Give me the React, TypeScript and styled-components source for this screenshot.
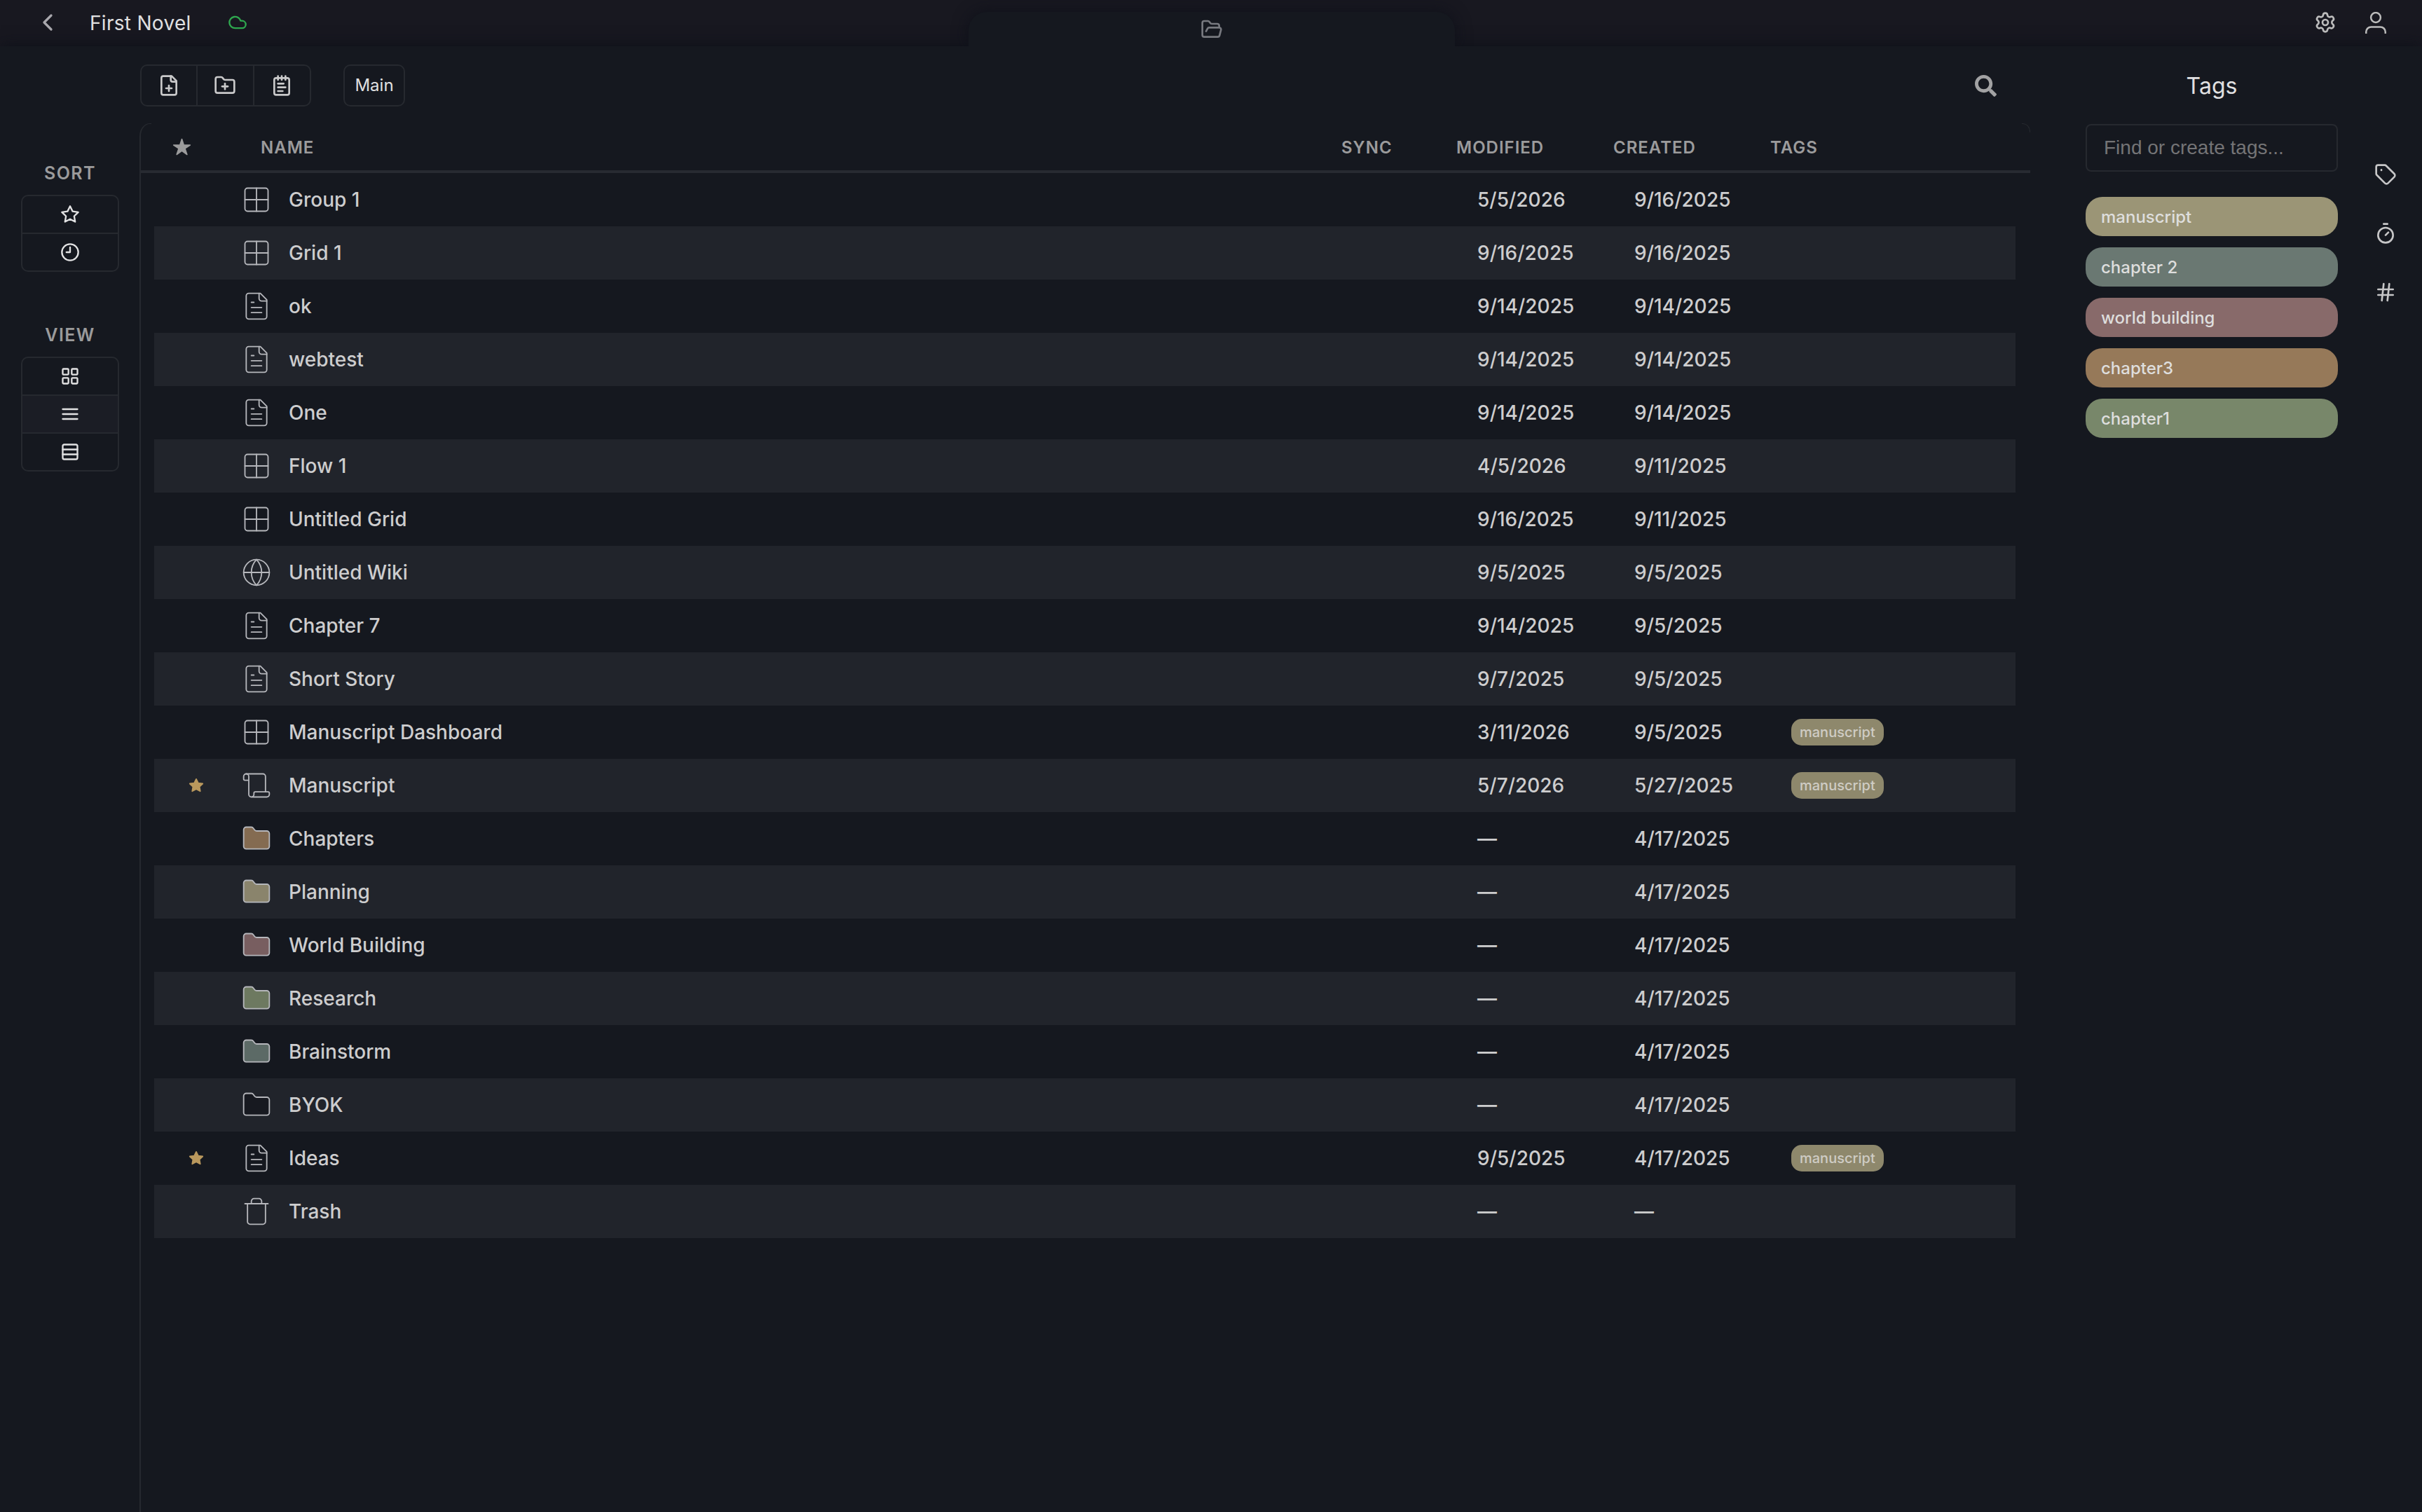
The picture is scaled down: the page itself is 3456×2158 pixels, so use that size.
import React from "react";
import styled, { createGlobalStyle } from "styled-components";
import { IoStar } from "react-icons/io5";
import { FaSearch } from "react-icons/fa";
import { Settings } from "lucide-react";

const c = {
  page: "#15181f",
  bar: "#181820",
  stripe: "#21242b",
  border: "#26292f",
  line: "#272a31",
  muted: "#9b9b9c",
  text: "#cdcdce",
  bright: "#e0e0e1",
};

const GlobalStyle = createGlobalStyle`
  * { box-sizing: border-box; }
  html, body { margin: 0; padding: 0; background: ${c.page}; }
  body { font-family: Inter, "Liberation Sans", sans-serif; color: ${c.text}; overflow: hidden; }
  button { font: inherit; color: inherit; background: none; border: 0; padding: 0; margin: 0; }
`;

/* ---------- icons ---------- */

const Svg = styled.svg<{ $size: number; $stroke: number }>`
  display: block;
  flex: none;
  width: ${(p) => p.$size}px;
  height: ${(p) => p.$size}px;
  fill: none;
  stroke: currentColor;
  stroke-width: ${(p) => p.$stroke};
  stroke-linecap: round;
  stroke-linejoin: round;
`;

const paths = {
  chevron: ["m15 18-6-6 6-6"],
  cloud: ["M17.5 19H9a7 7 0 1 1 6.71-9h1.79a4.5 4.5 0 1 1 0 9Z"],
  folderOpen: [
    "m6 14 1.5-2.9A2 2 0 0 1 9.24 10H20a2 2 0 0 1 1.94 2.5l-1.54 6a2 2 0 0 1-1.95 1.5H4a2 2 0 0 1-2-2V5a2 2 0 0 1 2-2h3.9a2 2 0 0 1 1.69.9l.81 1.2a2 2 0 0 0 1.67.9H18a2 2 0 0 1 2 2v2",
  ],
  filePlus: [
    "M15 2H6a2 2 0 0 0-2 2v16a2 2 0 0 0 2 2h12a2 2 0 0 0 2-2V7Z",
    "M14 2v4a2 2 0 0 0 2 2h4",
    "M9 15h6",
    "M12 18v-6",
  ],
  folderPlus: [
    "M12 10v6",
    "M9 13h6",
    "M20 20a2 2 0 0 0 2-2V8a2 2 0 0 0-2-2h-7.9a2 2 0 0 1-1.69-.9L9.6 3.9A2 2 0 0 0 7.93 3H4a2 2 0 0 0-2 2v13a2 2 0 0 0 2 2Z",
  ],
  notepad: [
    "M8 2v4",
    "M12 2v4",
    "M16 2v4",
    "M6 4h12a2 2 0 0 1 2 2v14a2 2 0 0 1-2 2H6a2 2 0 0 1-2-2V6a2 2 0 0 1 2-2Z",
    "M8 10h6",
    "M8 14h8",
    "M8 18h5",
  ],
  star: [
    "M12 2l3.09 6.26L22 9.27l-5 4.87 1.18 6.88L12 17.77l-6.18 3.25L7 14.14 2 9.27l6.91-1.01L12 2z",
  ],
  clock: ["M12 2a10 10 0 1 0 0 20 10 10 0 1 0 0-20", "M12 6v6H7.5"],
  tiles: [
    "M4 3h5a1 1 0 0 1 1 1v5a1 1 0 0 1-1 1H4a1 1 0 0 1-1-1V4a1 1 0 0 1 1-1Z",
    "M15 3h5a1 1 0 0 1 1 1v5a1 1 0 0 1-1 1h-5a1 1 0 0 1-1-1V4a1 1 0 0 1 1-1Z",
    "M15 14h5a1 1 0 0 1 1 1v5a1 1 0 0 1-1 1h-5a1 1 0 0 1-1-1v-5a1 1 0 0 1 1-1Z",
    "M4 14h5a1 1 0 0 1 1 1v5a1 1 0 0 1-1 1H4a1 1 0 0 1-1-1v-5a1 1 0 0 1 1-1Z",
  ],
  lines: ["M3 6h18", "M3 12h18", "M3 18h18"],
  rows: [
    "M5 3h14a2 2 0 0 1 2 2v14a2 2 0 0 1-2 2H5a2 2 0 0 1-2-2V5a2 2 0 0 1 2-2Z",
    "M21 9H3",
    "M21 15H3",
  ],
  tag: [
    "M12.586 2.586A2 2 0 0 0 11.172 2H4a2 2 0 0 0-2 2v7.172a2 2 0 0 0 .586 1.414l8.704 8.704a2.426 2.426 0 0 0 3.42 0l6.58-6.58a2.426 2.426 0 0 0 0-3.42Z",
    "M7.5 7h.01v.5h-.01Z",
  ],
  timer: ["M10 2h4", "M12 14l3-3", "M12 6a8 8 0 1 0 0 16 8 8 0 1 0 0-16"],
  hash: ["M4 9h16", "M4 15h16", "M10 3 8 21", "M16 3l-2 18"],
  grid: [
    "M5 3h14a2 2 0 0 1 2 2v14a2 2 0 0 1-2 2H5a2 2 0 0 1-2-2V5a2 2 0 0 1 2-2Z",
    "M3 12h18",
    "M12 3v18",
  ],
  file: [
    "M15 2H6a2 2 0 0 0-2 2v16a2 2 0 0 0 2 2h12a2 2 0 0 0 2-2V7Z",
    "M14 2v4a2 2 0 0 0 2 2h4",
    "M10 9H8",
    "M16 13H8",
    "M16 17H8",
  ],
  globe: [
    "M12 2a10 10 0 1 0 0 20 10 10 0 1 0 0-20",
    "M12 2a14.5 14.5 0 0 0 0 20 14.5 14.5 0 0 0 0-20",
    "M2 12h20",
  ],
  scroll: [
    "M19 17V5a2 2 0 0 0-2-2H4",
    "M8 21h12a2 2 0 0 0 2-2v-1a1 1 0 0 0-1-1H11a1 1 0 0 0-1 1v1a2 2 0 1 1-4 0V5a2 2 0 1 0-4 0v2a1 1 0 0 0 1 1h3",
  ],
  folder: [
    "M20 20a2 2 0 0 0 2-2V8a2 2 0 0 0-2-2h-7.9a2 2 0 0 1-1.69-.9L9.6 3.9A2 2 0 0 0 7.93 3H4a2 2 0 0 0-2 2v13a2 2 0 0 0 2 2Z",
  ],
  trash: [
    "M3 6h18",
    "M19 6v14c0 1-1 2-2 2H7c-1 0-2-1-2-2V6",
    "M8 6V4c0-1 1-2 2-2h4c1 0 2 1 2 2v2",
  ],
};

type IconName = keyof typeof paths;

function Icon({
  name,
  size,
  stroke = 2,
  fill,
}: {
  name: IconName;
  size: number;
  stroke?: number;
  fill?: string;
}) {
  return (
    <Svg $size={size} $stroke={stroke} viewBox="0 0 24 24">
      {paths[name].map((d) => (
        <path key={d} d={d} fill={fill} />
      ))}
    </Svg>
  );
}

const UserSvg = styled.svg`
  display: block;
  width: 30px;
  height: 31px;
  fill: none;
  stroke: currentColor;
  stroke-width: 2.5;
`;

function UserIcon() {
  return (
    <UserSvg viewBox="0 0 30 31">
      <circle cx="15" cy="8" r="6.9" />
      <path d="M1.25 31v-2.4a7.2 7.2 0 0 1 7.2-7.2h13.1a7.2 7.2 0 0 1 7.2 7.2V31" />
    </UserSvg>
  );
}

/* ---------- page frame ---------- */

const Page = styled.div`
  display: flex;
  flex-direction: column;
  width: 3456px;
  height: 2158px;
  background: ${c.page};
`;

const TopBar = styled.header`
  display: grid;
  grid-template-columns: 1382px 694px 1fr;
  height: 66px;
  flex: none;
  background: ${c.bar};
`;

const TopLeft = styled.div`
  display: flex;
  align-items: center;
  height: 64px;
  padding-left: 48px;
`;

const BackButton = styled.button`
  color: #a9a8ad;
`;

const ProjectTitle = styled.h1`
  margin: 0 0 0 40px;
  padding-top: 2px;
  width: 197px;
  font-size: 28px;
  font-weight: 400;
  line-height: 40px;
  letter-spacing: 0.3px;
  color: ${c.bright};
`;

const SyncState = styled.span`
  color: #2fa84f;
`;

const ActiveTab = styled.div`
  position: relative;
  z-index: 2;
  align-self: end;
  display: flex;
  justify-content: center;
  height: 49px;
  padding-top: 9px;
  background: ${c.page};
  border-radius: 26px 26px 0 0;
  box-shadow: 0 0 22px rgba(12, 15, 24, 0.75);
  clip-path: inset(-30px -30px 0 -30px);
  color: #77797f;
`;

const TopRight = styled.div`
  display: flex;
  align-items: center;
  justify-content: flex-end;
  gap: 41px;
  height: 64px;
  padding-right: 51px;
  color: #bcbcbc;
`;

const Body = styled.div`
  position: relative;
  z-index: 1;
  display: flex;
  flex: 1;
  min-height: 0;
  background: ${c.page};
  box-shadow: 0 -2px 20px -2px rgba(10, 14, 22, 0.8);
`;

/* ---------- left rail ---------- */

const Rail = styled.aside`
  width: 199px;
  flex: none;
  padding: 165px 29px 0 30px;
`;

const RailGroup = styled.section`
  margin-bottom: 74px;
`;

const RailLabel = styled.h2`
  margin: 0 0 14px;
  font-size: 25px;
  font-weight: 600;
  line-height: 33px;
  letter-spacing: 1.4px;
  text-align: center;
  color: ${c.muted};
`;

const RailBox = styled.div`
  border: 2px solid ${c.border};
  border-radius: 10px;
  overflow: hidden;
`;

const RailButton = styled.button<{ $active?: boolean }>`
  display: flex;
  align-items: center;
  justify-content: center;
  width: 100%;
  height: 52px;
  color: #e2e2e3;
  background: ${(p) => (p.$active ? "#1b1d25" : "transparent")};
  & + & {
    height: 54px;
    border-top: 2px solid ${c.border};
  }
`;

/* ---------- centre ---------- */

const Center = styled.main`
  display: flex;
  flex-direction: column;
  width: 2698px;
  flex: none;
`;

const Toolbar = styled.div`
  display: flex;
  align-items: center;
  height: 110px;
  padding: 2px 48px 0 1px;
`;

const ToolGroup = styled.div`
  display: flex;
  height: 60px;
  border: 2px solid ${c.border};
  border-radius: 10px;
  color: #c9c9ca;
`;

const ToolButton = styled.button`
  display: flex;
  align-items: center;
  justify-content: center;
  width: 78px;
  & + & {
    width: 81px;
    padding-right: 2px;
    border-left: 2px solid ${c.border};
  }
`;

const MainButton = styled.button`
  height: 60px;
  width: 88px;
  margin-left: 46px;
  border: 2px solid ${c.border};
  border-radius: 10px;
  font-size: 24px;
  line-height: 56px;
  color: ${c.bright};
`;

const SearchButton = styled.button`
  margin-left: auto;
  color: #a2a2a3;
  svg {
    display: block;
  }
`;

/* The left edge line starts below the rounded corner drawn by the head row. */
const Panel = styled.section`
  flex: 1;
  padding-left: 2px;
  background: linear-gradient(${c.border}, ${c.border}) 0 18px / 2px 100% no-repeat;
`;

const columns = "1542px 164px 224px 224px 1fr";

const HeadRow = styled.div`
  position: relative;
  display: grid;
  grid-template-columns: 126px ${columns};
  align-items: center;
  height: 71px;
  padding: 2px 0 0 45px;
  border-bottom: 4px solid ${c.line};
  font-size: 24px;
  font-weight: 600;
  letter-spacing: 1px;
  color: ${c.muted};
  svg {
    display: block;
    margin-top: -2px;
  }
  &::before,
  &::after {
    content: "";
    position: absolute;
    top: 0;
    border: 0 solid ${c.border};
  }
  &::before {
    left: -2px;
    width: 15px;
    height: 18px;
    border-width: 1px 0 0 2px;
    border-top-left-radius: 15px 18px;
  }
  &::after {
    right: 0;
    width: 11px;
    height: 12px;
    border-width: 1px 1px 0 0;
    border-top-right-radius: 11px 12px;
  }
`;

const Rows = styled.div`
  padding: 0 21px 0 19px;
`;

const Row = styled.div`
  display: grid;
  grid-template-columns: 124px 68px 1696px 224px 224px 1fr;
  align-items: center;
  height: 76px;
  font-size: 28px;
  font-weight: 500;
  color: ${c.text};
  &:nth-child(even) {
    background: ${c.stripe};
  }
`;

const StarCell = styled.span`
  display: flex;
  justify-content: center;
  padding-right: 4px;
  color: #b9985d;
`;

const IconCell = styled.span`
  color: #b6b7bc;
`;

const TagCell = styled.span`
  display: flex;
`;

const Pill = styled.span`
  height: 38px;
  padding: 0 12px;
  border-radius: 15px;
  background: #8e886c;
  font-size: 20px;
  line-height: 38px;
  color: #cfccc4;
`;

/* ---------- tags panel ---------- */

const TagsPanel = styled.aside`
  width: 439px;
  padding-left: 79px;
`;

const TagsTitle = styled.h2`
  width: 360px;
  margin: 35px 0 0;
  height: 76px;
  font-size: 32px;
  font-weight: 400;
  line-height: 44px;
  text-align: center;
  color: ${c.bright};
`;

const TagInput = styled.input`
  display: block;
  width: 360px;
  height: 68px;
  padding: 0 24px;
  border: 2px solid ${c.border};
  border-radius: 8px;
  outline: 0;
  background: transparent;
  font-family: "Liberation Sans", Arial, sans-serif;
  font-size: 28px;
  &::placeholder {
    color: #747476;
    opacity: 1;
  }
`;

const TagList = styled.div`
  display: flex;
  flex-direction: column;
  gap: 16px;
  width: 360px;
  margin-top: 36px;
`;

const TagItem = styled.div<{ $color: string }>`
  height: 56px;
  padding-left: 22px;
  border-radius: 24px;
  background: ${(p) => p.$color};
  font-size: 24px;
  font-weight: 500;
  line-height: 57px;
  color: #dededd;
`;

const SideTools = styled.nav`
  display: flex;
  flex-direction: column;
  gap: 52px;
  padding: 167px 0 0 52px;
  color: #c6c6c7;
`;

/* ---------- data ---------- */

type Item = {
  name: string;
  icon: IconName;
  modified: string;
  created: string;
  fill?: string;
  starred?: boolean;
  tag?: string;
};

const items: Item[] = [
  { name: "Group 1", icon: "grid", modified: "5/5/2026", created: "9/16/2025" },
  { name: "Grid 1", icon: "grid", modified: "9/16/2025", created: "9/16/2025" },
  { name: "ok", icon: "file", modified: "9/14/2025", created: "9/14/2025" },
  { name: "webtest", icon: "file", modified: "9/14/2025", created: "9/14/2025" },
  { name: "One", icon: "file", modified: "9/14/2025", created: "9/14/2025" },
  { name: "Flow 1", icon: "grid", modified: "4/5/2026", created: "9/11/2025" },
  { name: "Untitled Grid", icon: "grid", modified: "9/16/2025", created: "9/11/2025" },
  { name: "Untitled Wiki", icon: "globe", modified: "9/5/2025", created: "9/5/2025" },
  { name: "Chapter 7", icon: "file", modified: "9/14/2025", created: "9/5/2025" },
  { name: "Short Story", icon: "file", modified: "9/7/2025", created: "9/5/2025" },
  { name: "Manuscript Dashboard", icon: "grid", modified: "3/11/2026", created: "9/5/2025", tag: "manuscript" },
  { name: "Manuscript", icon: "scroll", modified: "5/7/2026", created: "5/27/2025", tag: "manuscript", starred: true },
  { name: "Chapters", icon: "folder", fill: "#846b51", modified: "—", created: "4/17/2025" },
  { name: "Planning", icon: "folder", fill: "#8a846c", modified: "—", created: "4/17/2025" },
  { name: "World Building", icon: "folder", fill: "#785e60", modified: "—", created: "4/17/2025" },
  { name: "Research", icon: "folder", fill: "#6d7960", modified: "—", created: "4/17/2025" },
  { name: "Brainstorm", icon: "folder", fill: "#5c6a66", modified: "—", created: "4/17/2025" },
  { name: "BYOK", icon: "folder", fill: "#171920", modified: "—", created: "4/17/2025" },
  { name: "Ideas", icon: "file", modified: "9/5/2025", created: "4/17/2025", tag: "manuscript", starred: true },
  { name: "Trash", icon: "trash", modified: "—", created: "—" },
];

const tags = [
  { label: "manuscript", color: "#9b9576" },
  { label: "chapter 2", color: "#6a7872" },
  { label: "world building", color: "#886a6a" },
  { label: "chapter3", color: "#967959" },
  { label: "chapter1", color: "#78876a" },
];

export default function App() {
  return (
    <>
      <GlobalStyle />
      <Page>
        <TopBar>
          <TopLeft>
            <BackButton aria-label="Back">
              <Icon name="chevron" size={40} />
            </BackButton>
            <ProjectTitle>First Novel</ProjectTitle>
            <SyncState>
              <Icon name="cloud" size={28} />
            </SyncState>
          </TopLeft>
          <ActiveTab>
            <Icon name="folderOpen" size={32} />
          </ActiveTab>
          <TopRight>
            <Settings size={32} />
            <UserIcon />
          </TopRight>
        </TopBar>

        <Body>
          <Rail>
            <RailGroup>
              <RailLabel>SORT</RailLabel>
              <RailBox>
                <RailButton>
                  <Icon name="star" size={28} />
                </RailButton>
                <RailButton>
                  <Icon name="clock" size={28} />
                </RailButton>
              </RailBox>
            </RailGroup>
            <RailGroup>
              <RailLabel>VIEW</RailLabel>
              <RailBox>
                <RailButton>
                  <Icon name="tiles" size={28} />
                </RailButton>
                <RailButton $active>
                  <Icon name="lines" size={28} />
                </RailButton>
                <RailButton>
                  <Icon name="rows" size={28} />
                </RailButton>
              </RailBox>
            </RailGroup>
          </Rail>

          <Center>
            <Toolbar>
              <ToolGroup>
                <ToolButton>
                  <Icon name="filePlus" size={32} />
                </ToolButton>
                <ToolButton>
                  <Icon name="folderPlus" size={32} />
                </ToolButton>
                <ToolButton>
                  <Icon name="notepad" size={32} />
                </ToolButton>
              </ToolGroup>
              <MainButton>Main</MainButton>
              <SearchButton aria-label="Search">
                <FaSearch size={31} />
              </SearchButton>
            </Toolbar>

            <Panel>
              <HeadRow>
                <IoStar size={27} />
                <span>NAME</span>
                <span>SYNC</span>
                <span>MODIFIED</span>
                <span>CREATED</span>
                <span>TAGS</span>
              </HeadRow>
              <Rows>
                {items.map((item) => (
                  <Row key={item.name}>
                    <StarCell>
                      {item.starred && (
                        <Icon name="star" size={22} fill="currentColor" />
                      )}
                    </StarCell>
                    <IconCell>
                      <Icon name={item.icon} size={44} stroke={1} fill={item.fill} />
                    </IconCell>
                    <span>{item.name}</span>
                    <span>{item.modified}</span>
                    <span>{item.created}</span>
                    <TagCell>{item.tag && <Pill>{item.tag}</Pill>}</TagCell>
                  </Row>
                ))}
              </Rows>
            </Panel>
          </Center>

          <TagsPanel>
            <TagsTitle>Tags</TagsTitle>
            <TagInput placeholder="Find or create tags..." />
            <TagList>
              {tags.map((tag) => (
                <TagItem key={tag.label} $color={tag.color}>
                  {tag.label}
                </TagItem>
              ))}
            </TagList>
          </TagsPanel>

          <SideTools>
            <Icon name="tag" size={32} />
            <Icon name="timer" size={32} />
            <Icon name="hash" size={32} />
          </SideTools>
        </Body>
      </Page>
    </>
  );
}
